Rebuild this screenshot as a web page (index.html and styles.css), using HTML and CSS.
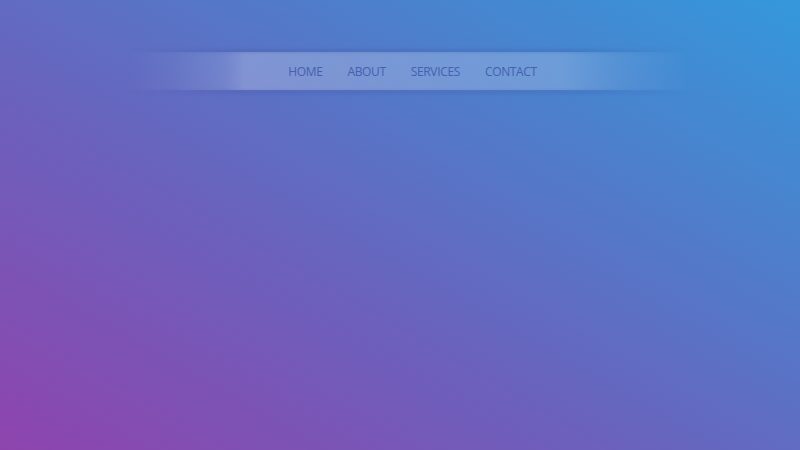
FILE: index.html
```html
<!DOCTYPE html>
<html>
<head>
<meta charset="utf-8">
<link rel="stylesheet" href="styles.css">
</head>
<body>
<nav class="nav">
  <ul class="menu">
    <li><a href="#">Home</a></li>
    <li><a href="#">About</a></li>
    <li><a href="#">Services</a></li>
    <li><a href="#">Contact</a></li>
  </ul>
</nav>
</body>
</html>
```
FILE: styles.css
```css
html, body {
  margin: 0;
  height: 100%;
}
body {
  background: linear-gradient(30deg, #8e44ad 0%, #6a62bd 40%, #5379c8 65%, #3498db 100%);
  font-family: "Open Sans", "Noto Sans", sans-serif;
  padding-top: 52px;
  box-sizing: border-box;
}
.nav {
  position: relative;
  margin-left: 130px;
  width: 560px;
  height: 38px;
  background: linear-gradient(90deg,
    rgba(255,255,255,0) 0%,
    rgba(255,255,255,0.05) 8%,
    rgba(255,255,255,0.14) 17%,
    rgba(255,255,255,0.24) 20.5%,
    rgba(255,255,255,0.22) 50%,
    rgba(255,255,255,0.2) 77%,
    rgba(255,255,255,0.08) 88%,
    rgba(255,255,255,0) 100%);
  display: flex;
  justify-content: center;
  align-items: center;
}
.nav::before,
.nav::after {
  content: "";
  position: absolute;
  left: 0;
  right: 0;
  height: 4px;
}
.nav::before {
  top: -3px;
  background: linear-gradient(90deg, rgba(40,50,130,0), rgba(40,50,130,0.14) 20%, rgba(40,50,130,0.14) 80%, rgba(40,50,130,0));
  filter: blur(1.5px);
}
.nav::after {
  bottom: -4px;
  background: linear-gradient(90deg, rgba(40,50,130,0), rgba(40,50,130,0.12) 20%, rgba(40,50,130,0.12) 80%, rgba(40,50,130,0));
  filter: blur(1.5px);
}
.menu {
  list-style: none;
  margin: -2px 0 0 5px;
  padding: 0;
  display: flex;
  gap: 25px;
}
.menu a {
  text-decoration: none;
  text-transform: uppercase;
  font-size: 12px;
  letter-spacing: -0.35px;
  color: #4460b0;
}
```
